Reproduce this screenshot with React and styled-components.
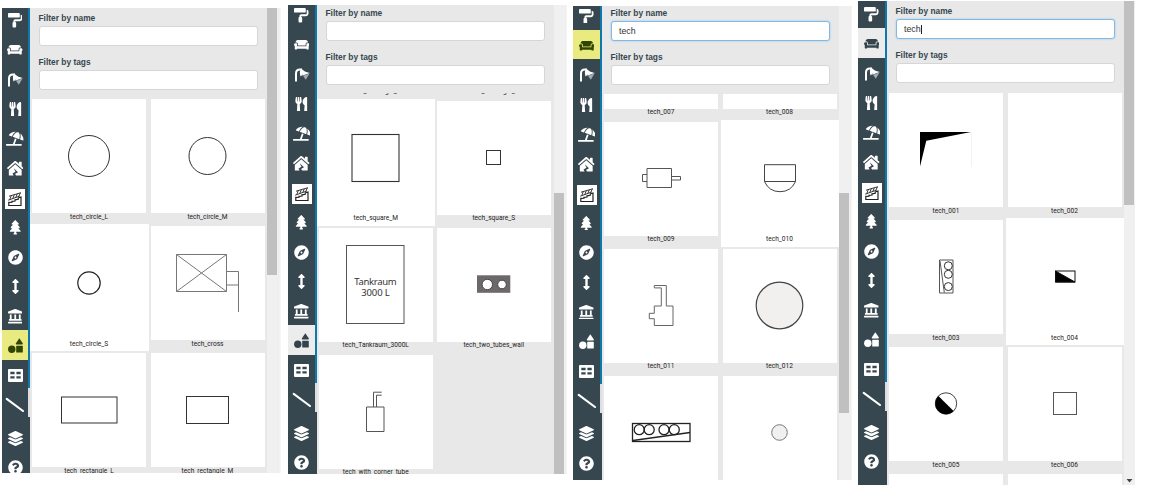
import React from 'react';
import styled, { createGlobalStyle, css } from 'styled-components';
import {
  FaPaintRoller, FaCouch, FaUtensils, FaUmbrellaBeach, FaHouseDamage, FaTree, FaCompass,
  FaArrowsAltV, FaLandmark, FaLayerGroup, FaQuestionCircle,
} from 'react-icons/fa';

const GlobalStyle = createGlobalStyle`
  * { box-sizing: border-box; }
  body { margin: 0; background: #fff; overflow: hidden; font-family: Roboto, "Liberation Sans", sans-serif; }
`;

const Board = styled.main`
  display: flex;
  align-items: flex-start;
  width: 1154px;
  height: 485px;
  overflow: hidden;
  padding-left: 2px;
`;

const Panel = styled.section`
  display: flex;
  flex: none;
  height: ${p => p.$height}px;
  margin-top: ${p => p.$top}px;
  margin-right: ${p => p.$after}px;
  overflow: hidden;
`;

const Rail = styled.nav`
  display: flex;
  flex: none;
  width: ${p => p.$width}px;
  background: #37474f;
`;

const RailButtons = styled.div`
  flex: 1;
  margin-top: ${p => p.$shift}px;
`;

const activeTones = {
  yellow: css`background: #e9ea80; color: #2f4500;`,
  gray: css`background: #ececec; color: #33444d;`,
};

const RailButton = styled.button`
  display: flex;
  align-items: center;
  justify-content: center;
  width: 100%;
  height: 29.6px;
  margin: ${p => (p.$spaced ? '3.4px' : 0)} 0 0;
  padding: 2px 0 0;
  border: 0;
  background: transparent;
  color: #fff;
  ${p => activeTones[p.$tone]}
  svg { display: block; flex: none; }
`;

const RailEdge = styled.div`
  display: flex;
  flex-direction: column;
  width: 2px;
  margin-top: ${p => p.$shift}px;
`;
const EdgeLine = styled.div`
  height: 383.5px;
  background: #0c78ab;
`;
const EdgeHandle = styled.div`
  height: 29px;
  background: #dcdfe1;
`;

const StairsTile = styled.span`
  display: flex;
  align-items: center;
  justify-content: center;
  width: 20px;
  height: 20px;
  margin-top: 3px;
  background: #fff;
  color: #222;
`;

const Content = styled.div`
  display: flex;
  flex-direction: column;
  width: 237px;
  background: #e8e8e8;
  overflow: hidden;
`;

const Filters = styled.form`
  flex: none;
  height: ${p => p.$height}px;
  padding: ${p => p.$pad}px 9px 0 8.5px;
`;

const Field = styled.label`
  display: block;
  height: 44px;
  font: bold 8.4px/12px "Liberation Sans", Arial, sans-serif;
  color: #37474f;
`;

const Input = styled.span`
  display: flex;
  align-items: center;
  height: 20px;
  margin-top: 2px;
  padding-left: 7.5px;
  border: 1px solid ${p => (p.$focus ? '#82b9e4' : '#d6d6d6')};
  border-radius: 3px;
  background: #fff;
  box-shadow: ${p => (p.$focus ? '0 0 2px #8cc3ec' : 'none')};
  font: 8.8px/12px "Liberation Sans", Arial, sans-serif;
  color: #333;
`;

const Caret = styled.i`
  width: 1px;
  height: 9px;
  background: #222;
`;

const List = styled.div`
  flex: 1;
  min-height: 0;
  overflow: hidden;
`;

const Grid = styled.div`
  display: grid;
  grid-template-columns: repeat(2, ${p => p.$column}px);
  grid-auto-rows: 127px;
  margin-top: ${p => p.$scroll}px;
`;

const Item = styled.figure`
  margin: 0;
  padding: 2px 2.5px 0 2px;
  background: ${p => (p.$selected ? '#fff' : 'transparent')};
`;

const Thumb = styled.div`
  height: 114px;
  background: #fff;
  overflow: hidden;
  svg { display: block; }
`;

const Name = styled.figcaption`
  height: 9px;
  margin-top: ${p => p.$shift}px;
  font-size: 6.6px;
  line-height: 9px;
  text-align: center;
  white-space: nowrap;
  color: #222;
`;

const Track = styled.div`
  display: flex;
  flex-direction: column;
  width: 11px;
  background: #f0f0f0;
  padding-top: ${p => p.$start}px;
`;
const Handle = styled.div`
  flex: none;
  height: ${p => p.$size}px;
  margin-right: 1px;
  background: #c0c0c0;
`;
const TrackArrow = styled.svg`
  display: block;
  margin: auto 0 2px 2px;
`;
const Margin = styled.div`
  width: ${p => p.$width}px;
  background: linear-gradient(90deg, #ececee, #f7f7f7);
`;

const LampIcon = () => (
  <svg width="16" height="16" viewBox="0 0 16 16" fill="none">
    <path d="M2 14.5V6.5Q2 2.6 6 2.6H8" stroke="#fff" strokeWidth="2" />
    <path d="M7 1.5L11.5 5L6.5 9.5Q5 5 7 1.5Z" fill="#fff" />
    <path d="M10.5 4.5L15.8 6L8 8.8Z" fill="#fff" />
    <path d="M15.5 6.5L9 8.8L11.8 12.8Z" fill="#a3abb0" />
  </svg>
);

const StairsIcon = () => (
  <svg width="16" height="16" viewBox="0 0 16 16" fill="none" stroke="currentColor" strokeWidth="0.9">
    <path d="M2 5.2L14 1.7M1.2 9.2L12.8 5M4.3 4.6L2.8 8.5M7.3 3.7L5.8 7.5M10.3 2.8L8.8 6.4M13.3 2L11.8 5.3" />
    <path d="M1.8 10.7V14.5H14V6L11.2 7V8.3L8 8.8V10L5 10.4V11.2L2 11.5" strokeWidth="1.2" />
  </svg>
);

const ShapesIcon = () => (
  <svg width="15" height="15" viewBox="0 0 15 15" fill="currentColor">
    <circle cx="3.8" cy="11.2" r="3.7" />
    <rect x="8.2" y="7.7" width="6.6" height="6.8" rx="0.6" />
    <path d="M11.3 0.3L14.9 5.6Q15 6.4 14.3 6.4H8.3Q7.6 6.4 7.8 5.6Z" />
  </svg>
);

const TableIcon = () => (
  <svg width="15" height="13" viewBox="0 0 15 13">
    <path fill="currentColor" fillRule="evenodd" d="M1 0H14Q15 0 15 1V12Q15 13 14 13H1Q0 13 0 12V1Q0 0 1 0ZM2.3 2.8V5.2H6.6V2.8ZM8.4 2.8V5.2H12.7V2.8ZM2.3 7.2V9.6H6.6V7.2ZM8.4 7.2V9.6H12.7V7.2Z" />
  </svg>
);

const LineIcon = () => (
  <svg width="20" height="16" viewBox="0 0 20 16">
    <path d="M1.7 1.8L18 14" stroke="currentColor" strokeWidth="2.1" strokeLinecap="round" />
  </svg>
);

const tools = [
  ['paint', <FaPaintRoller size={14.5} />],
  ['furniture', <FaCouch size={15.5} />],
  ['lamp', <LampIcon />],
  ['kitchen', <FaUtensils size={14.5} />],
  ['beach', <FaUmbrellaBeach size={17.5} />],
  ['house', <FaHouseDamage size={16.5} />],
  ['stairs', <StairsTile><StairsIcon /></StairsTile>],
  ['tree', <FaTree size={14.5} />],
  ['compass', <FaCompass size={15} />],
  ['measure', <FaArrowsAltV size={15} />],
  ['building', <FaLandmark size={14.5} />],
  ['shapes', <ShapesIcon />],
  ['table', <TableIcon />],
  ['line', <LineIcon />],
  ['layers', <FaLayerGroup size={15} />],
  ['help', <FaQuestionCircle size={15} />],
];

const Drawing = ({ children, stroke = '#333', width = 1 }) => (
  <svg width="114" height="114" viewBox="0 0 114 114" fill="none" stroke={stroke} strokeWidth={width}>
    {children}
  </svg>
);

const drawings = {
  tech_circle_L: <Drawing><circle cx="57" cy="57" r="20.5" /></Drawing>,
  tech_circle_M: <Drawing><circle cx="56.5" cy="57" r="18.5" /></Drawing>,
  tech_circle_S: <Drawing stroke="#222" width={1.2}><circle cx="57" cy="57" r="11.2" /></Drawing>,
  tech_cross: (
    <Drawing stroke="#777">
      <path d="M25.5 28.5H75.5V65.5H25.5ZM25.5 28.5L75.5 65.5M25.5 65.5L75.5 28.5M75.5 45.5H87.5V86M75.5 59H87.5" />
    </Drawing>
  ),
  tech_rectangle_L: <Drawing><rect x="29.5" y="44" width="55.5" height="26" /></Drawing>,
  tech_rectangle_M: <Drawing><rect x="35.5" y="43.5" width="42" height="27" /></Drawing>,
  tech_square_M: <Drawing width={1.1}><rect x="33" y="33.5" width="47" height="47" /></Drawing>,
  tech_square_S: <Drawing><rect x="49.5" y="49.5" width="14" height="14" /></Drawing>,
  tech_Tankraum_3000L: (
    <Drawing stroke="#555">
      <rect x="27.5" y="17.5" width="57.5" height="78" />
      <g fill="#333" stroke="none" fontFamily="'Noto Sans', sans-serif" fontSize="9.5" textAnchor="middle">
        <text x="56.5" y="56.5" textLength="42.5">Tankraum</text>
        <text x="56.5" y="67.9" textLength="28.5">3000 L</text>
      </g>
    </Drawing>
  ),
  tech_two_tubes_wall: (
    <Drawing stroke="#474445">
      <rect x="40" y="47.3" width="33.3" height="17.5" fill="#6d696a" stroke="none" />
      <circle cx="50.3" cy="56.5" r="5.2" fill="#fff" />
      <circle cx="65" cy="56.5" r="4.3" fill="#fff" />
    </Drawing>
  ),
  tech_with_corner_tube: (
    <Drawing stroke="#555">
      <path d="M47.5 52H65V76.5H47.5ZM54.5 52V37.2H62.7M57.5 52V40.2H62.7" />
    </Drawing>
  ),
  tech_009: (
    <Drawing stroke="#555">
      <path d="M43 46.5H67.5V65.5H43ZM43 52.5H38.5V59.5H43M67.5 54.5H76.5V58H67.5" />
    </Drawing>
  ),
  tech_010: <Drawing stroke="#444"><path d="M41.5 42.7H72.5V59.5H41.5ZM41.5 59.5Q46 69.7 57 69.7Q68 69.7 72.5 59.5" /></Drawing>,
  tech_011: (
    <Drawing stroke="#666">
      <path d="M50.3 36.5H62.3V57H69V76.5H50.3V69.7H45.3V64.3H50.3V57H57.3V38.9H50.3Z" />
    </Drawing>
  ),
  tech_012: <Drawing stroke="#444" width={1.2}><circle cx="56.5" cy="56.5" r="23.3" fill="#f1f0ef" /></Drawing>,
  tech_013: (
    <Drawing stroke="#222" width={1.3}>
      <rect x="28.5" y="47.5" width="57.5" height="18" />
      <path d="M29 64.5L86 56.5" />
      <circle cx="35.2" cy="53.7" r="5" /><circle cx="45.2" cy="53.7" r="5" />
      <circle cx="60" cy="53.7" r="5" /><circle cx="70.3" cy="53.7" r="5" />
    </Drawing>
  ),
  tech_014: <Drawing stroke="#777"><circle cx="56.5" cy="56.5" r="7.8" fill="#f1f0ef" /></Drawing>,
  tech_001: (
    <Drawing stroke="none">
      <path d="M31 39H82L37.3 47.7L31 73.5Z" fill="#000" />
      <path d="M82.5 39V74" stroke="#f3f3f3" />
    </Drawing>
  ),
  tech_003: (
    <Drawing stroke="#555">
      <path d="M50.5 40H64V73H50.5ZM51 41L55.3 72.5" />
      <g stroke="#333">
        <circle cx="59.3" cy="45.8" r="4" /><circle cx="59.3" cy="54.3" r="4" /><circle cx="59.3" cy="66.6" r="4" />
      </g>
    </Drawing>
  ),
  tech_004: (
    <Drawing stroke="#111">
      <rect x="47.5" y="51" width="19.5" height="11" />
      <path d="M47.5 51L67 62H47.5Z" fill="#000" />
    </Drawing>
  ),
  tech_005: (
    <Drawing stroke="#444">
      <circle cx="57" cy="56.5" r="10.7" />
      <path d="M49.4 48.9A10.7 10.7 0 0 0 64.6 64.1Z" fill="#000" stroke="none" />
    </Drawing>
  ),
  tech_006: <Drawing stroke="#555"><rect x="45.5" y="45.5" width="23" height="22" /></Drawing>,
};

const panels = [
  {
    top: 8, height: 465, after: 7, railWidth: 28, rail: -3.4, active: 'shapes', tone: 'yellow',
    pad: 4, header: 90, scroll: -1, column: 118.5, nameShift: 0, track: [0, 267], margin: 3,
    items: ['tech_circle_L', 'tech_circle_M', 'tech_circle_S', 'tech_cross', 'tech_rectangle_L', 'tech_rectangle_M'],
    selected: 'tech_circle_S',
  },
  {
    top: 5, height: 469, after: 6, railWidth: 29, rail: -5.4, active: 'shapes', tone: 'gray',
    pad: 1.5, header: 88, scroll: -121, column: 118, nameShift: -1, track: [188, 281], margin: 2,
    items: ['tech_rectangle_S', 'tech_rectangle_X', 'tech_square_M', 'tech_square_S', 'tech_Tankraum_3000L', 'tech_two_tubes_wall', 'tech_with_corner_tube'],
    selected: 'tech_square_M',
  },
  {
    top: 6, height: 474, after: 6, railWidth: 29, rail: -5.8, active: 'furniture', tone: 'yellow',
    pad: 1, header: 88, scroll: -101, column: 118.5, nameShift: -1, track: [187, 220], margin: 2, query: 'tech',
    items: ['tech_007', 'tech_008', 'tech_009', 'tech_010', 'tech_011', 'tech_012', 'tech_013', 'tech_014'],
    selected: 'tech_010',
  },
  {
    top: 1, height: 484, after: 0, railWidth: 29, rail: -2.4, active: 'furniture', tone: 'gray',
    pad: 4, header: 91, scroll: -1, column: 118.5, nameShift: 0, track: [0, 204], margin: 0, query: 'tech', caret: true, arrow: true,
    items: ['tech_001', 'tech_002', 'tech_003', 'tech_004', 'tech_005', 'tech_006', 'tech_007', 'tech_008'],
    selected: 'tech_004',
  },
];

function CatalogPanel({ data }) {
  return (
    <Panel $top={data.top} $height={data.height} $after={data.after}>
      <Rail $width={data.railWidth}>
        <RailButtons $shift={data.rail}>
          {tools.map(([id, icon]) => (
            <RailButton key={id} type="button" aria-label={id} $spaced={id === 'layers'} $tone={id === data.active ? data.tone : undefined}>
              {icon}
            </RailButton>
          ))}
        </RailButtons>
        <RailEdge $shift={data.rail}>
          <EdgeLine />
          <EdgeHandle />
        </RailEdge>
      </Rail>
      <Content>
        <Filters $height={data.header} $pad={data.pad}>
          <Field>
            Filter by name
            <Input $focus={!!data.query}>{data.query}{data.caret && <Caret />}</Input>
          </Field>
          <Field>
            Filter by tags
            <Input />
          </Field>
        </Filters>
        <List>
          <Grid $scroll={data.scroll} $column={data.column}>
            {data.items.map(name => (
              <Item key={name} $selected={name === data.selected}>
                <Thumb>{drawings[name]}</Thumb>
                <Name $shift={data.nameShift}>{name}</Name>
              </Item>
            ))}
          </Grid>
        </List>
      </Content>
      <Track $start={data.track[0]}>
        <Handle $size={data.track[1]} />
        {data.arrow && <TrackArrow width="7" height="4" viewBox="0 0 7 4"><path d="M0.5 0H6.5L3.5 3.5Z" fill="#444" /></TrackArrow>}
      </Track>
      <Margin $width={data.margin} />
    </Panel>
  );
}

export default function App() {
  return (
    <>
      <GlobalStyle />
      <Board>
        {panels.map(data => <CatalogPanel key={data.top} data={data} />)}
      </Board>
    </>
  );
}
